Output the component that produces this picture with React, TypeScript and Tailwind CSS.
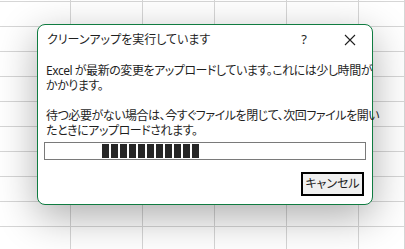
import React from "react";

const font = "font-['Noto_Sans','Noto_Sans_CJK_JP',sans-serif] [font-feature-settings:'palt']";

const Sheet = () => {
  const cells = Array.from({ length: 6 * 11 });
  return (
    <div className="grid grid-cols-[71px_72px_72px_72px_72px_1fr] grid-rows-[2px_repeat(10,25px)] bg-white">
      {cells.map((_, i) => (
        <div key={i} className="border-r border-b border-[#d6d6d6]" />
      ))}
    </div>
  );
};

const CloseIcon = () => (
  <svg width="12" height="12" viewBox="0 0 12 12" fill="none">
    <path d="M1 1L11 11M11 1L1 11" stroke="#1f1f1f" strokeWidth="1.1" />
  </svg>
);

const Progress = () => (
  <div className="h-[18px] border border-[#7a7a7a] bg-white flex items-center pl-[57px] gap-[2px]">
    {Array.from({ length: 11 }).map((_, i) => (
      <div key={i} className="w-[7px] h-[14px] bg-[#262626]" />
    ))}
  </div>
);

export default function App() {
  return (
    <div className={`relative w-[405px] h-[249px] overflow-hidden ${font}`}>
      <Sheet />

      {/* Dialog */}
      <div className="absolute left-[37px] top-[24px] w-[336px] h-[181px] bg-white border border-[#107c41] rounded-[8px] shadow-[0_12px_40px_rgba(0,0,0,0.32)] flex flex-col text-[#1f1f1f]">
        <div className="h-[30px] flex items-center pl-[9px] pr-[16px] text-[12px]">
          <span className="flex-1">クリーンアップを実行しています</span>
          <span className="w-[10px] text-center text-[13px] mr-[35px]">?</span>
          <CloseIcon />
        </div>

        <div className="pl-[8px] mt-[8px] text-[12px] leading-[15px] whitespace-nowrap tracking-[-0.45px]">
          <p>Excel が最新の変更をアップロードしています。これには少し時間が<br />かかります。</p>
          <p className="mt-[15px]">待つ必要がない場合は、今すぐファイルを閉じて、次回ファイルを開い<br />たときにアップロードされます。</p>
        </div>

        <div className="pl-[6px] pr-[6px] mt-[4px]">
          <Progress />
        </div>

        <div className="flex justify-end pr-[8px] mt-[12px]">
          <button className="w-[63px] h-[24px] border-2 border-black bg-[#f0f0f0] text-[12px] text-[#1f1f1f] flex items-center justify-center">
            キャンセル
          </button>
        </div>
      </div>
    </div>
  );
}
